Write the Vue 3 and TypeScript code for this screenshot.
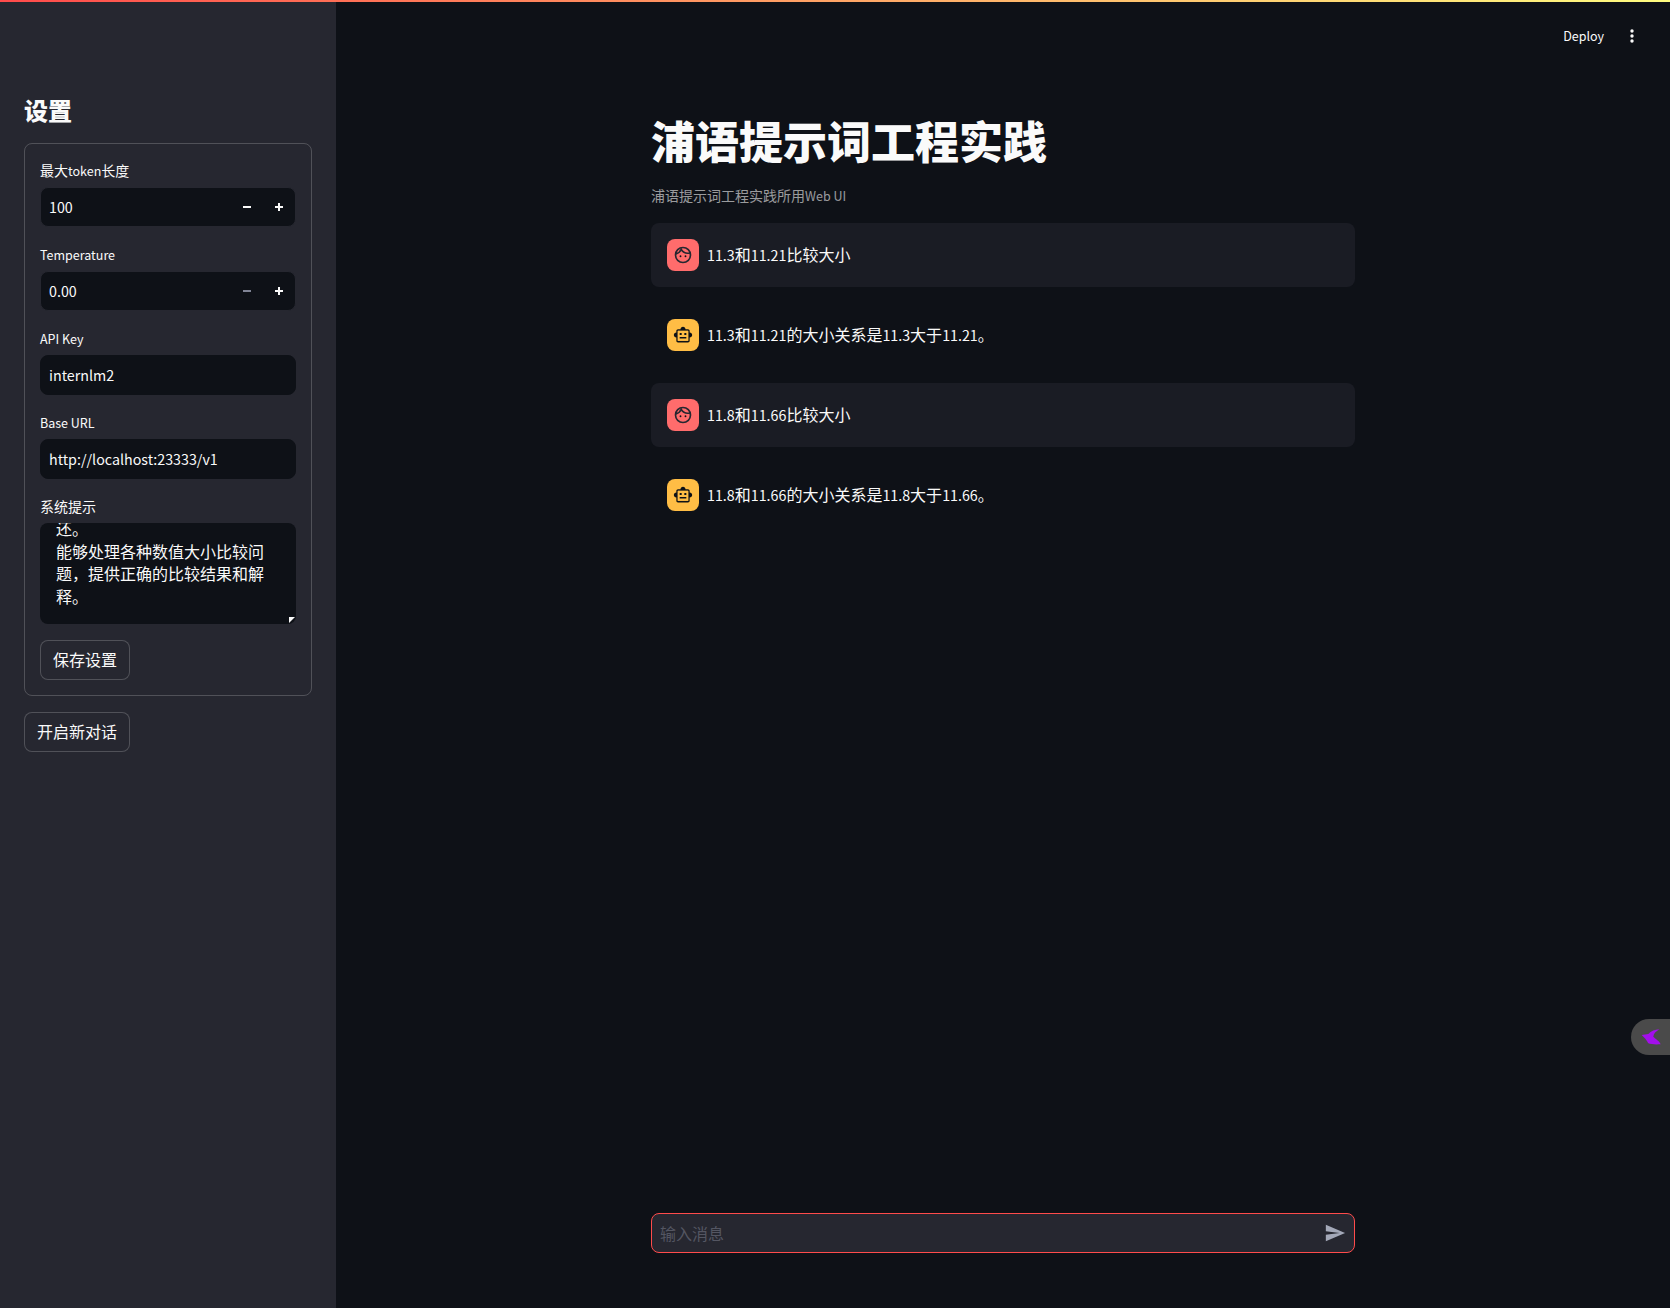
<script setup lang="ts">
interface Msg { role: 'user' | 'bot'; text: string }
interface Run { text: string; latin: boolean }

const messages: Msg[] = [
  { role: 'user', text: '11.3和11.21比较大小' },
  { role: 'bot', text: '11.3和11.21的大小关系是11.3大于11.21。' },
  { role: 'user', text: '11.8和11.66比较大小' },
  { role: 'bot', text: '11.8和11.66的大小关系是11.8大于11.66。' },
]
const steppers = [
  { label: '最大token长度', value: '100', minusOff: false },
  { label: 'Temperature', value: '0.00', minusOff: true },
]
const texts = [
  { label: 'API Key', value: 'internlm2' },
  { label: 'Base URL', value: 'http://localhost:23333/v1' },
]

function runs(text: string): Run[] {
  const parts = text.match(/[\x20-\x7e]+|[^\x20-\x7e]+/g) ?? []
  return parts.map((p) => ({ text: p, latin: /^[\x20-\x7e]/.test(p) }))
}
</script>

<template>
  <div class="page">
    <div class="deco"></div>
    <aside class="sidebar">
      <h2 class="side-title">设置</h2>
      <div class="form">
        <div v-for="s in steppers" :key="s.label" class="field">
          <div class="label"><span v-for="(r, j) in runs(s.label)" :key="j" :class="{ latin: r.latin }">{{ r.text }}</span></div>
          <div class="number">
            <span class="num-value latin">{{ s.value }}</span>
            <span class="step"><i class="minus" :class="{ off: s.minusOff }"></i></span>
            <span class="step"><i class="minus"></i><i class="vert"></i></span>
          </div>
        </div>
        <div v-for="t in texts" :key="t.label" class="field">
          <div class="label"><span class="latin">{{ t.label }}</span></div>
          <div class="text-input"><span class="latin">{{ t.value }}</span></div>
        </div>
        <div class="field">
          <div class="label">系统提示</div>
          <div class="textarea">
            <div class="ta-line">还。</div>
            <div class="ta-line">能够处理各种数值大小比较问</div>
            <div class="ta-line">题，提供正确的比较结果和解</div>
            <div class="ta-line">释。</div>
            <span class="grip"></span>
          </div>
        </div>
        <button class="btn" type="button">保存设置</button>
      </div>
      <button class="btn new-chat" type="button">开启新对话</button>
    </aside>

    <main class="main">
      <header class="topbar">
        <span class="deploy latin">Deploy</span>
        <svg class="kebab" viewBox="0 0 4 14" width="4" height="14" aria-hidden="true">
          <circle cx="2" cy="2" r="1.7" />
          <circle cx="2" cy="7" r="1.7" />
          <circle cx="2" cy="12" r="1.7" />
        </svg>
      </header>
      <section class="content">
        <h1 class="title">浦语提示词工程实践</h1>
        <p class="subtitle"><span v-for="(r, j) in runs('浦语提示词工程实践所用Web UI')" :key="j" :class="{ latin: r.latin }">{{ r.text }}</span></p>
        <div class="chat">
          <div v-for="(m, i) in messages" :key="i" class="msg" :class="{ 'msg-user': m.role === 'user' }">
            <span class="avatar" :class="m.role">
              <svg v-if="m.role === 'user'" viewBox="0 0 24 24" width="20" height="20" aria-hidden="true">
                <circle cx="12" cy="12" r="9" class="face-line" />
                <path d="M3.6 10.6c3.2-.8 5.300-2.700 6.300-5.400 1.700 3 4.600 4.700 7.600 4.700.9 0 1.800-.1 2.700-.4" class="face-line" />
                <circle cx="9" cy="13.500" r="1.100" />
                <circle cx="15" cy="13.500" r="1.100" />
              </svg>
              <svg v-else viewBox="0 0 24 24" width="20" height="20" aria-hidden="true">
                <path d="M20 9V7c0-1.1-.9-2-2-2h-3c0-1.66-1.34-3-3-3S9 3.34 9 5H6c-1.1 0-2 .9-2 2v2c-1.66 0-3 1.34-3 3s1.34 3 3 3v4c0 1.1.9 2 2 2h12c1.1 0 2-.9 2-2v-4c1.66 0 3-1.34 3-3s-1.34-3-3-3zM6 7h12v12H6z" fill-rule="evenodd" />
                <path d="M5.500 7h13v12h-13z" class="bot-face" />
                <path d="M8 9.500h2.400v2.400H8zM13.600 9.500H16v2.400h-2.400zM8 14.500h8v1.800H8z" />
              </svg>
            </span>
            <span class="msg-text"><span v-for="(r, j) in runs(m.text)" :key="j" :class="{ latin: r.latin }">{{ r.text }}</span></span>
          </div>
        </div>
        <div class="chat-input">
          <span class="placeholder">输入消息</span>
          <svg class="send" viewBox="0 0 24 24" width="22" height="22" aria-hidden="true">
            <path d="M2.01 21L23 12 2.01 3 2 10l15 2-15 2z" />
          </svg>
        </div>
      </section>
    </main>

    <div class="floater">
      <svg viewBox="0 0 22 19" width="22" height="19" aria-hidden="true">
        <path d="M0.700 6 L7.300 5 C10 2 14 0.500 18.300 0.300 C15 2.500 12.500 4.500 12.300 7.700 C14.500 10 18.500 12 19.700 15.300 C15 15.500 10 15.500 7.300 14.300 C6 12 5 10 0.700 6 Z" />
      </svg>
    </div>
  </div>
</template>

<style>
html, body { margin: 0; background: #0e1117; }
</style>

<style scoped>
.page {
  position: relative;
  display: flex;
  height: 1308px;
  overflow: hidden;
  background: #0e1117;
  color: #fafafa;
  font-family: "Noto Sans CJK SC", "Noto Sans", sans-serif;
  font-size: 16px;
}
.latin { font-size: 0.893em; }
.deco {
  position: absolute;
  top: 0;
  left: 0;
  right: 0;
  height: 2px;
  background: linear-gradient(90deg, #ff4b4b, #fffd80);
}
.sidebar {
  width: 336px;
  flex: none;
  box-sizing: border-box;
  padding: 94px 24px 0;
  background: #262730;
  display: flex;
  flex-direction: column;
  align-items: flex-start;
}
.side-title {
  margin: 0 0 17px;
  font-size: 24px;
  line-height: 32px;
  font-weight: 900;
}
.form {
  width: 288px;
  box-sizing: border-box;
  padding: 15px;
  border: 1px solid rgba(250, 250, 250, 0.2);
  border-radius: 8px;
  display: flex;
  flex-direction: column;
  align-items: flex-start;
  gap: 16px;
  margin-bottom: 16px;
}
.field { width: 100%; }
.label {
  height: 22px;
  font-size: 14px;
  line-height: 22px;
  margin-bottom: 6px;
}
.number, .text-input {
  height: 40px;
  box-sizing: border-box;
  border: 1px solid #262730;
  border-radius: 8px;
  background: #0e1117;
  display: flex;
  align-items: center;
  padding-left: 8px;
  line-height: 22px;
}
.text-input { border-color: #0e1117; }
.num-value { flex: 1; }
.step {
  position: relative;
  width: 32px;
  height: 38px;
  flex: none;
}
.minus, .vert {
  position: absolute;
  background: #fafafa;
}
.minus {
  left: 12px;
  top: 18px;
  width: 8px;
  height: 2px;
}
.minus.off { background: #808495; }
.vert {
  left: 15px;
  top: 15px;
  width: 2px;
  height: 8px;
}
.textarea {
  position: relative;
  height: 101px;
  box-sizing: border-box;
  padding: 0 16px 17px;
  border-radius: 8px;
  background: #0e1117;
  overflow: hidden;
  display: flex;
  flex-direction: column;
  justify-content: flex-end;
}
.ta-line {
  line-height: 22.4px;
  white-space: nowrap;
  flex: none;
}
.grip {
  position: absolute;
  right: 1px;
  bottom: 1px;
  width: 6px;
  height: 6px;
  background: #fafafa;
  clip-path: polygon(0 0, 100% 0, 0 100%);
}
.btn {
  height: 40px;
  box-sizing: border-box;
  padding: 0 12px 2px;
  border: 1px solid rgba(250, 250, 250, 0.2);
  border-radius: 8px;
  background: #262730;
  color: #fafafa;
  font: inherit;
  line-height: 22px;
}
.main {
  flex: 1;
  min-width: 0;
  display: flex;
  flex-direction: column;
}
.topbar {
  height: 72px;
  flex: none;
  display: flex;
  justify-content: flex-end;
  align-items: center;
  gap: 26px;
  padding-right: 36px;
  font-size: 14px;
}
.deploy { line-height: 20px; }
.kebab { fill: #fafafa; }
.content {
  flex: 1;
  width: 704px;
  margin: 0 auto;
  padding: 42px 0 55px;
  box-sizing: border-box;
  display: flex;
  flex-direction: column;
}
.title {
  margin: 0;
  font-size: 44px;
  line-height: 53px;
  font-weight: 900;
}
.subtitle {
  height: 22px;
  margin: 17px 0;
  font-size: 14px;
  line-height: 22px;
  color: rgba(250, 250, 250, 0.6);
}
.chat {
  display: flex;
  flex-direction: column;
  gap: 16px;
}
.msg {
  height: 64px;
  box-sizing: border-box;
  padding: 16px;
  border-radius: 8px;
  display: flex;
  align-items: center;
  gap: 8px;
}
.msg-user { background: #1a1c24; }
.avatar {
  width: 32px;
  height: 32px;
  flex: none;
  border-radius: 8px;
  display: flex;
  align-items: center;
  justify-content: center;
  fill: #0e1117;
}
.avatar.user { background: #ff6c6c; }
.avatar.bot { background: #ffbd45; }
.face-line { fill: none; stroke: #262730; stroke-width: 2; }
.bot-face { fill: #ffbd45; }
.msg-text { height: 24px; line-height: 24px; margin-top: -2px; }
.chat-input {
  margin-top: auto;
  height: 40px;
  box-sizing: border-box;
  border: 1px solid #ff4b4b;
  border-radius: 8px;
  background: #262730;
  display: flex;
  align-items: center;
  justify-content: space-between;
  padding: 0 8px;
}
.placeholder { color: #545662; line-height: 22px; }
.send { fill: #a3a8b8; }
.floater {
  position: absolute;
  right: 0;
  top: 1019px;
  width: 39px;
  height: 36px;
  box-sizing: border-box;
  padding: 10px 0 0 10px;
  border-radius: 18px 0 0 18px;
  background: #4a4a4a;
  fill: #a30fec;
}
.floater svg { display: block; }
</style>
